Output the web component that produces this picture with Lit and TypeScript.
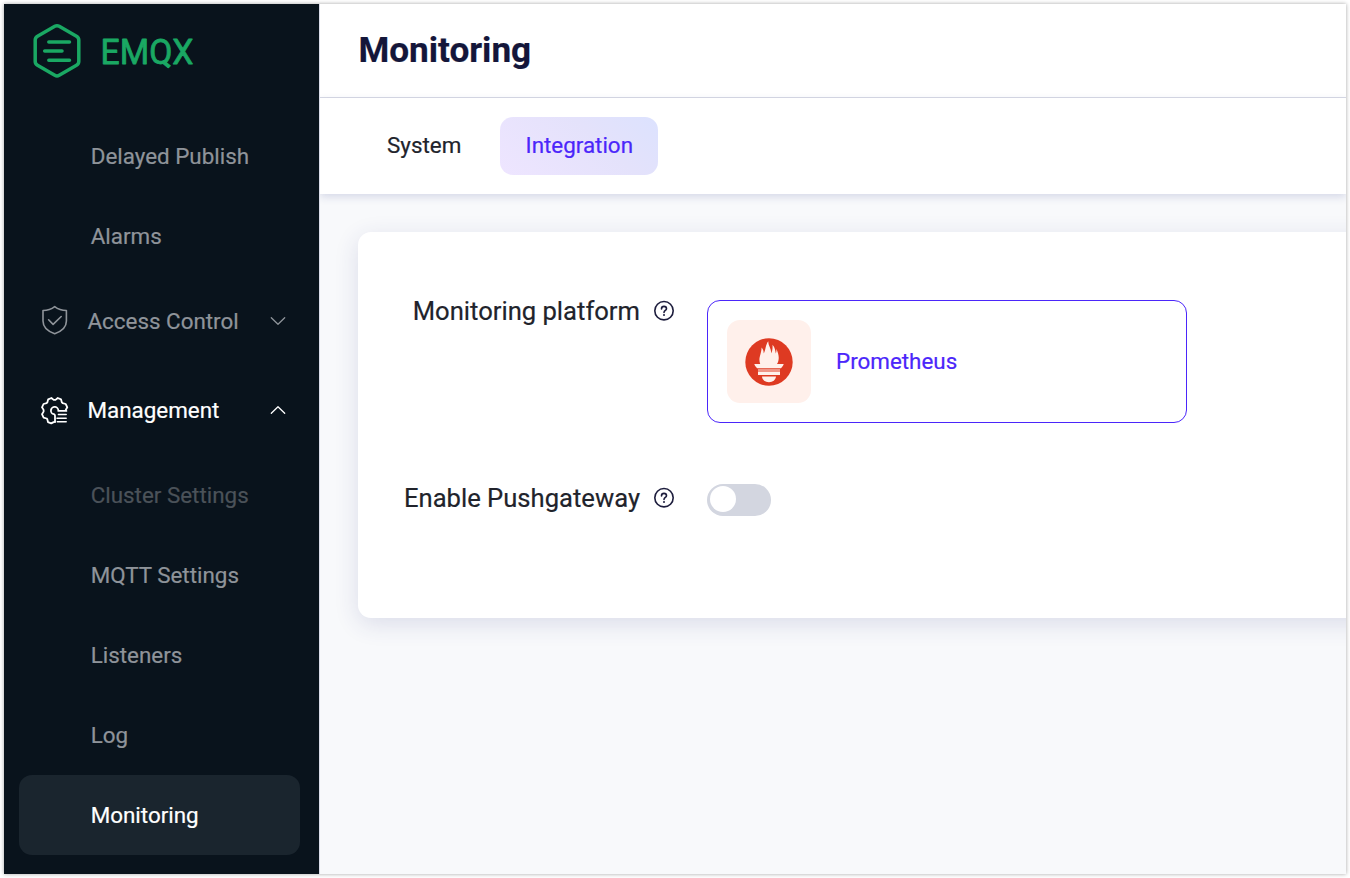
import { LitElement, html, css, svg } from "lit";
import { customElement, property } from "lit/decorators.js";

const shieldIcon = svg`<svg class="icon" viewBox="0 0 30 30" fill="none" stroke="currentColor" stroke-width="1.6" stroke-linejoin="round" stroke-linecap="round">
  <path d="M14.700 1.600C18 4.200 22 5.500 26.400 5.500V16C26.400 22 21.200 26.500 14.700 28.700C8.200 26.500 3 22 3 16V5.500C7.700 5.500 11.400 4.200 14.700 1.600Z"/>
  <path d="M8.600 14.800L13.100 19.400L21.200 11.500"/>
</svg>`;

const gearIcon = svg`<svg class="icon" viewBox="0 0 30 30" fill="none" stroke="currentColor" stroke-width="1.8" stroke-linejoin="round" stroke-linecap="round">
  <path d="M14.800 26.900L13.600 27.100L11.200 28.400L8 27.100L7.300 24.200L6.600 23.500L3.600 22.600L2 19.200L3.600 16.600V14.900L2 12.300L3.500 9L6.600 8.100L7.300 7.400L8.200 4.300L11.400 3L13.700 4.900H15.500L17.800 3L21 4.300L21.900 7.400L22.600 8.100L25.700 9L27.300 12.300L25.800 14.700"/>
  <path d="M26.400 15.900H18.300A3.700 3.700 0 1 0 13.900 19.200Q15 19.600 15 20.800V27"/>
  <path d="M18.400 19.600H26.200M17 23.200H26.200M17.300 26.800H26.200" stroke-width="1.500"/>
</svg>`;

const chevron = (up: boolean) => svg`<svg class="chevron" viewBox="0 0 16 10" fill="none" stroke="currentColor" stroke-width="1.3" stroke-linecap="round" stroke-linejoin="round">
  <path d=${up ? "M1.300 8.300L8 1.700L14.700 8.300" : "M1.300 1.700L8 8.300L14.700 1.700"}/>
</svg>`;

@customElement("side-bar")
class SideBar extends LitElement {
  static styles = css`
    :host { display: flex; flex-direction: column; width: 315px; flex: none; background: #09131c; color: #8f949a; overflow: hidden; }
    .brand { display: flex; align-items: center; height: 111px; flex: none; }
    .logo { display: block; width: 200px; height: 60px; margin: -17px 0 0 24px; }
    .row { display: flex; align-items: center; box-sizing: border-box; height: 80px; flex: none; margin: 0 19px 0 15px; padding: 2px 0 0 71.700px; border-radius: 13px; font-size: 22.400px; line-height: 30px; white-space: nowrap; }
    .group { height: 90px; padding: 2px 14.500px 0 21px; }
    .group .label { flex: 1; }
    .icon { width: 30px; height: 30px; margin-right: 17.500px; margin-top: -3px; flex: none; }
    .chevron { width: 16px; height: 10px; flex: none; }
    .open, .open ~ .row { padding-top: 0; }
    .open { color: #fff; }
    .open .icon { margin-top: -1px; }
    .disabled { color: #4b5259; }
    .active { color: #fff; background: #1a252e; }
  `;
  render() {
    return html`
      <div class="brand">
        <svg class="logo" viewBox="0 0 200 60" fill="none" stroke="#1aa863" stroke-width="3.500" stroke-linecap="round" stroke-linejoin="round">
          <path d="M26.800 5.300Q29 4 31.200 5.300L48.500 15.200Q50.800 16.500 50.800 19V40.600Q50.800 43 48.500 44.300L31.200 54.300Q29 55.600 26.800 54.300L9.500 44.300Q7.200 43 7.200 40.600V19Q7.200 16.500 9.500 15.200Z"/>
          <path d="M20.800 20.900H41.500M16.700 30H34M20.800 39.300H41.500"/>
          <text x="72.500" y="42.600" textLength="93" lengthAdjust="spacingAndGlyphs" font-family="Roboto, sans-serif" font-size="34.500" font-weight="400" fill="#1aa863" stroke-width="0.800">EMQX</text>
        </svg>
      </div>
      <div class="row">Delayed Publish</div>
      <div class="row">Alarms</div>
      <div class="row group">${shieldIcon}<span class="label">Access Control</span>${chevron(false)}</div>
      <div class="row group open">${gearIcon}<span class="label">Management</span>${chevron(true)}</div>
      <div class="row disabled">Cluster Settings</div>
      <div class="row">MQTT Settings</div>
      <div class="row">Listeners</div>
      <div class="row">Log</div>
      <div class="row active">Monitoring</div>
    `;
  }
}

@customElement("form-label")
class FormLabel extends LitElement {
  @property() text = "";
  static styles = css`
    :host { display: flex; align-items: center; justify-content: flex-end; width: 317px; height: 40px; flex: none; font-size: 25.600px; color: #21232b; white-space: nowrap; }
    .help { width: 22px; height: 22px; margin-left: 13px; flex: none; }
  `;
  render() {
    return html`<span>${this.text}</span>
      <svg class="help" viewBox="0 0 22 22" fill="none" stroke="#1d1d3d" stroke-width="1.600" stroke-linecap="round">
        <circle cx="11" cy="10.700" r="9.200"/>
        <path d="M8.500 8.900C8.500 7.300 9.500 6.400 11 6.400S13.500 7.300 13.500 8.700C13.500 10.400 11 10.600 11 12.500"/>
        <circle cx="11" cy="15.100" r="1" fill="#1d1d3d" stroke="none"/>
      </svg>`;
  }
}

@customElement("app-root")
class AppRoot extends LitElement {
  static styles = css`
    :host { display: block; box-sizing: border-box; width: 1350px; height: 878px; padding: 4px; background: #fff; font-family: Roboto, sans-serif; -webkit-text-stroke-width: 0.200px; overflow: hidden; }
    .window { display: flex; width: 1342px; height: 870px; box-shadow: 0 0 4px rgba(0, 0, 0, 0.36); }
    .main { flex: 1; min-width: 0; box-sizing: border-box; display: flex; flex-direction: column; overflow: hidden; background: #f8f9fb; border-left: 1px solid #d9dce8; }
    .head { box-sizing: border-box; height: 94px; flex: none; border-bottom: 1px solid #d8dae5; background: #fff; padding: 24px 0 0 38.500px; }
    .title { margin: 0; font-size: 35.200px; line-height: 44px; font-weight: 700; color: #14163a; letter-spacing: -0.040px; }
    .tabs { display: flex; align-items: center; gap: 13px; box-sizing: border-box; height: 96px; flex: none; background: #fff; padding-left: 41px; box-shadow: 0 3px 8px rgba(40, 50, 130, 0.16); }
    .tab { display: flex; align-items: center; justify-content: center; box-sizing: border-box; height: 58px; border-radius: 13px; padding: 0 26px 2px; font-size: 22.400px; color: #21232b; }
    .tab.current { color: #4b26fa; background: linear-gradient(42deg, #eee5ff, #e4e2fb 62%, #dce2fe); width: 158px; padding: 0 0 2px; }
    .card { box-sizing: border-box; height: 386px; margin: 38px -40px 0 38px; padding: 68px 0 0; background: #fff; border-radius: 13px; box-shadow: 0 6px 24px rgba(40, 50, 130, 0.14); }
    .field { display: flex; align-items: flex-start; }
    .platform { display: flex; align-items: center; box-sizing: border-box; width: 480px; height: 123px; margin-left: 32px; padding: 0 0 1px 19px; border: 1px solid #4b26fa; border-radius: 13px; color: #4b26fa; font-size: 22.400px; }
    .badge { box-sizing: border-box; width: 84px; height: 83px; margin-right: 25px; padding-top: 1px; border-radius: 13px; background: #fff0eb; display: flex; align-items: center; justify-content: center; }
    .flame { width: 48px; height: 48px; }
    .name { margin-top: -1px; }
    .push { margin-top: 55px; }
    .switch { box-sizing: border-box; width: 64px; height: 32px; margin: 6px 0 0 32px; padding: 2px 2.500px; border-radius: 16px; background: #d3d6e0; }
    .knob { width: 26px; height: 26px; border-radius: 50%; background: #fff; }
    .lift { margin-top: -9px; }
  `;
  render() {
    return html`
      <div class="window">
        <side-bar></side-bar>
        <div class="main">
          <div class="head"><h1 class="title">Monitoring</h1></div>
          <div class="tabs">
            <div class="tab">System</div>
            <div class="tab current">Integration</div>
          </div>
          <div class="card">
            <div class="field">
              <form-label class="lift" text="Monitoring platform"></form-label>
              <div class="platform">
                <div class="badge">
                  <svg class="flame" viewBox="0 0 48 48">
                    <circle cx="24" cy="24" r="23.700" fill="#de3a22"/>
                    <g fill="#fff0eb">
                      <path d="M9.300 26H15.200C14.300 23.500 14.100 20.800 14.900 18.200C15.800 15 16.500 12.600 16.600 9.500C18 11 18.800 13 18.700 15.600C20.700 12.500 20.400 6.500 23.300 3.200C23.300 8 26.200 10 26.200 15.200C27.200 13.500 27.800 10.500 27.500 6.800C30 9 30.200 13 30.800 15.500C31.400 14.200 31.600 12.500 31.400 10.800C33.100 15.200 34.100 18 33.600 21.500C33.300 23.500 32.800 25 31.900 26H38.700C38.200 27.900 37.200 29 36 30.200H12.200C10.800 29 9.800 27.900 9.300 26Z"/>
                      <path d="M13 31.400H35V32.400H13ZM13 33.400H35V37H13ZM17 38.600H31C30.700 42 27.700 44.300 24 44.300S17.300 42 17 38.600Z"/>
                    </g>
                  </svg>
                </div>
                <span class="name">Prometheus</span>
              </div>
            </div>
            <div class="field push">
              <form-label text="Enable Pushgateway"></form-label>
              <div class="switch"><div class="knob"></div></div>
            </div>
          </div>
        </div>
      </div>
    `;
  }
}
